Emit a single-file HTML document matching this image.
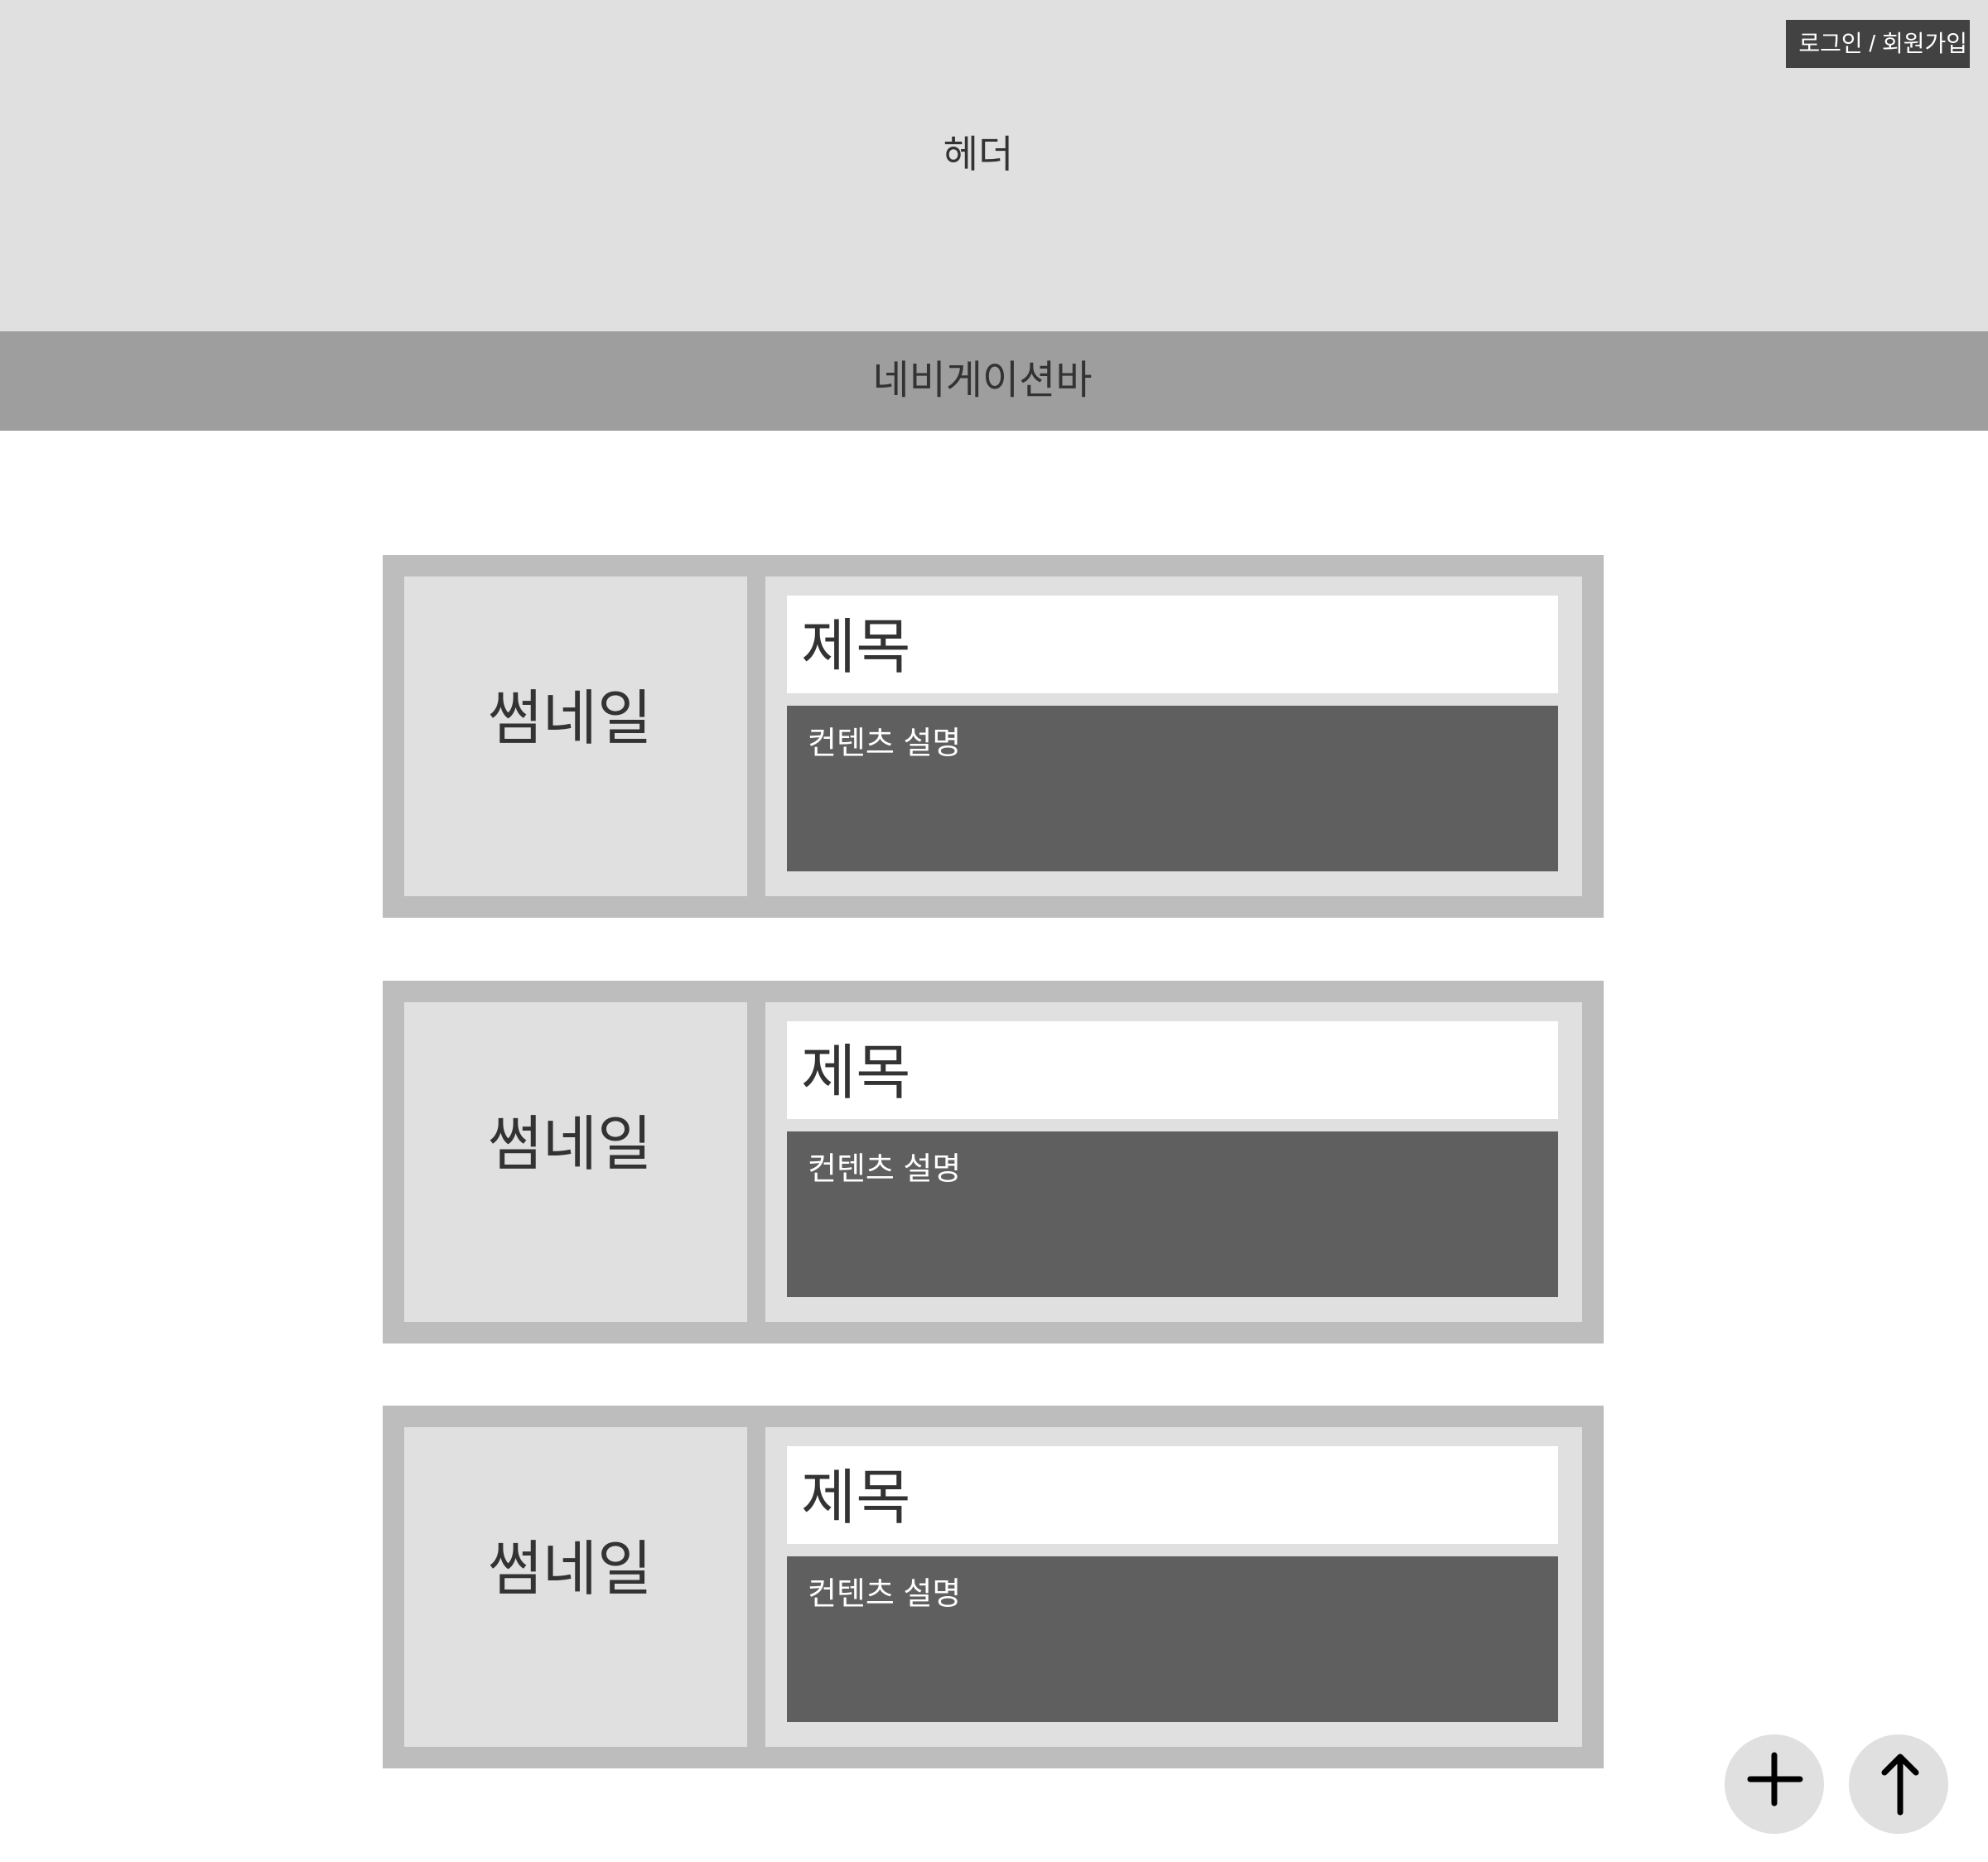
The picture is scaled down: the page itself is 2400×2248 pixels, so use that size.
<!DOCTYPE html>
<html><head><meta charset="utf-8"><style>
*{margin:0;padding:0;box-sizing:border-box}
body{width:2400px;height:2248px;background:#fff;position:relative;overflow:hidden;font-family:"Liberation Sans","Noto Sans CJK KR",sans-serif;color:#333}
.a{position:absolute}
.hdr{left:0;top:0;width:2400px;height:400px;background:#e0e0e0}
.nav{left:0;top:400px;width:2400px;height:120px;background:#9e9e9e;text-align:center;line-height:120px;font-size:48px;padding-right:28px}
.login{left:2156px;top:24px;width:222px;height:58px;background:#424242;color:#fff;font-size:28px;line-height:58px;text-align:right;padding-right:3px;white-space:nowrap}
.card{left:462px;width:1474px;height:438px;background:#bdbdbd}
.th{left:26px;top:26px;width:414px;height:386px;background:#e0e0e0;font-size:72px;text-align:center;line-height:344px;padding-right:14px}
.rp{left:462px;top:26px;width:986px;height:386px;background:#e0e0e0}
.ti{left:26px;top:23px;width:931px;height:118px;background:#fff;font-size:72px;line-height:126px;padding-left:17px}
.de{left:26px;top:156px;width:931px;height:200px;background:#5f5f5f;color:#fff;font-size:38px;padding-left:25px;padding-top:14px}
.btn{top:2094px;width:120px;height:120px;border-radius:50%;background:#e0e0e0}
</style></head><body>
<div class="a hdr"><div class="a" style="left:0;width:2362px;top:156px;text-align:center;font-size:46px;line-height:60px">헤더</div></div>
<div class="a login">로그인 / 회원가입</div>
<div class="a nav">네비게이션바</div>

<div class="a card" style="top:670px"><div class="a th">썸네일</div><div class="a rp"><div class="a ti">제목</div><div class="a de">컨텐츠 설명</div></div></div>
<div class="a card" style="top:1184px"><div class="a th">썸네일</div><div class="a rp"><div class="a ti">제목</div><div class="a de">컨텐츠 설명</div></div></div>
<div class="a card" style="top:1697px"><div class="a th">썸네일</div><div class="a rp"><div class="a ti">제목</div><div class="a de">컨텐츠 설명</div></div></div>

<div class="a btn" style="left:2082px"><svg width="120" height="120"><path d="M31 54H91M60 25V83" stroke="#000" stroke-width="7" stroke-linecap="round" fill="none"/></svg></div>
<div class="a btn" style="left:2232px"><svg width="120" height="120"><path d="M62 28V94M43 46L62 27L81 46" stroke="#000" stroke-width="7" stroke-linecap="round" stroke-linejoin="round" fill="none"/></svg></div>
</body></html>
